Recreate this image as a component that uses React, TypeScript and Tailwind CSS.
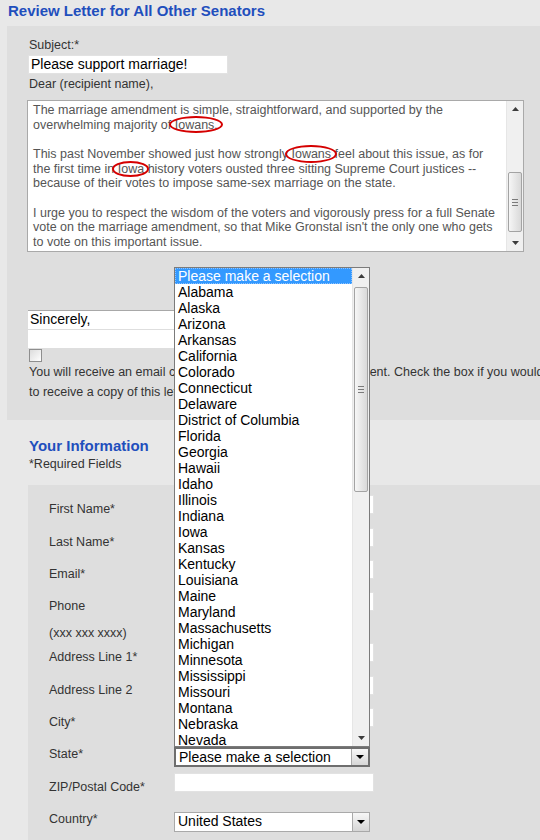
import React from 'react'

const STATES = [
  'Alabama', 'Alaska', 'Arizona', 'Arkansas', 'California', 'Colorado', 'Connecticut', 'Delaware',
  'District of Columbia', 'Florida', 'Georgia', 'Hawaii', 'Idaho', 'Illinois', 'Indiana', 'Iowa',
  'Kansas', 'Kentucky', 'Louisiana', 'Maine', 'Maryland', 'Massachusetts', 'Michigan', 'Minnesota',
  'Mississippi', 'Missouri', 'Montana', 'Nebraska', 'Nevada',
]

const Arrow: React.FC<{ up?: boolean }> = ({ up }) => (
  <svg width="7" height="4" viewBox="0 0 7 4" aria-hidden="true">
    <path d={up ? 'M3.5 0 L7 4 L0 4 Z' : 'M0 0 L7 0 L3.5 4 Z'} fill="#3c3c3c" />
  </svg>
)

// old windows style scrollbar: arrow, thumb with grip, arrow
const Scrollbar: React.FC<{ thumbClass: string }> = ({ thumbClass }) => (
  <div className="flex flex-col w-[17px] h-full bg-[#f0f0f0] border-l border-[#e6e6e6] shrink-0">
    <div className="h-[16px] flex items-center justify-center">
      <Arrow up />
    </div>
    <div className={`mx-[1px] rounded-[2px] border border-[#a3a3a3] bg-gradient-to-r from-[#f6f6f6] to-[#d9d9d9] flex flex-col items-center justify-center gap-[2px] ${thumbClass}`}>
      <div className="w-[6px] h-px bg-[#7a7a7a]" />
      <div className="w-[6px] h-px bg-[#7a7a7a]" />
      <div className="w-[6px] h-px bg-[#7a7a7a]" />
    </div>
    <div className="flex-1" />
    <div className="h-[16px] flex items-center justify-center">
      <Arrow />
    </div>
  </div>
)

const Circled: React.FC<{ children: React.ReactNode; ring: string }> = ({ children, ring }) => (
  <span className="relative">
    {children}
    <span className={`absolute border-2 border-[#d50000] rounded-[50%] ${ring}`} />
  </span>
)

const TextBox: React.FC<{ className?: string; children?: React.ReactNode }> = ({ className = '', children }) => (
  <div className={`w-[200px] h-[19px] bg-white border border-[#e2e2e2] text-[14px] leading-[17px] text-black px-[2px] ${className}`}>
    {children}
  </div>
)

const SelectBox: React.FC<{ value: string; focused?: boolean }> = ({ value, focused }) => (
  <div
    className={`w-[196px] h-[20px] bg-white flex items-stretch ${
      focused ? 'border-2 border-[#6e6e6e]' : 'border border-[#a9a9a9]'
    }`}
  >
    <div className="flex-1 text-[14px] leading-[17px] text-black pl-[3px] whitespace-nowrap overflow-hidden">{value}</div>
    <div className="w-[17px] border-l border-[#a9a9a9] bg-gradient-to-b from-[#f7f7f7] to-[#d6d6d6] flex items-center justify-center">
      <svg width="8" height="4" viewBox="0 0 8 4" aria-hidden="true">
        <path d="M0 0 L8 0 L4 4 Z" fill="#000" />
      </svg>
    </div>
  </div>
)

const Row: React.FC<{ label: string; h: string; labelTop: string; hint?: string; children: React.ReactNode }> = ({
  label,
  h,
  labelTop,
  hint,
  children,
}) => (
  <div className={`flex items-start ${h}`}>
    <div className={`w-[125px] leading-[14px] whitespace-nowrap ${labelTop}`}>
      <div>{label}</div>
      {hint && <div className="mt-[13px]">{hint}</div>}
    </div>
    {children}
  </div>
)

export default function App() {
  return (
    <div className="relative w-[540px] h-[840px] overflow-hidden bg-[#e8e8e8] font-['Liberation_Sans',Arial,sans-serif] text-[12.5px] text-[#333]">
      {/* Letter header */}
      <div className="h-[26px] pl-[8px] pt-[3px] text-[15px] leading-[16px] font-bold text-[#1f4fbd] whitespace-nowrap">
        Review Letter for All Other Senators
      </div>

      {/* Letter panel */}
      <div className="ml-[7px] h-[394px] bg-[#dedede] pt-[12px] pl-[21px]">
        <div className="leading-[14px] pl-px">Subject:*</div>
        <TextBox className="mt-[3px]">Please support marriage!</TextBox>
        <div className="mt-[3px] leading-[14px] pl-px">Dear (recipient name),</div>

        <div className="mt-[9px] -ml-px w-[497px] h-[152px] border border-[#a9a9a9] bg-white flex">
          <div className="flex-1 pl-[5px] pt-[2px] text-[#555] leading-[14.67px] whitespace-nowrap overflow-hidden">
            <div>The marriage amendment is simple, straightforward, and supported by the</div>
            <div>
              overwhelming majority of{' '}
              <Circled ring="-left-[6px] -right-[5px] -top-[2px] -bottom-[1px]">Iowans.</Circled>
            </div>
            <div>&nbsp;</div>
            <div>
              This past November showed just how strongly{' '}
              <Circled ring="-left-[6px] -right-[6px] -top-[2px] -bottom-[2px]">Iowans</Circled> feel about this issue, as for
            </div>
            <div>
              the first time in <Circled ring="-left-[6px] -right-[5px] -top-[1px] -bottom-[1px]">Iowa</Circled> history voters
              ousted three sitting Supreme Court justices --
            </div>
            <div>because of their votes to impose same-sex marriage on the state.</div>
            <div>&nbsp;</div>
            <div>I urge you to respect the wisdom of the voters and vigorously press for a full Senate</div>
            <div>vote on the marriage amendment, so that Mike Gronstal isn't the only one who gets</div>
            <div>to vote on this important issue.</div>
          </div>
          <Scrollbar thumbClass="mt-[55px] h-[60px]" />
        </div>

        <div className="mt-[58px] w-[200px] h-[19px] bg-white border-t border-[#a8a8a8] text-[14px] leading-[17px] text-black px-[2px]">
          Sincerely,
        </div>
        <div className="mt-px w-[200px] h-[18px] bg-white" />
        <div className="mt-px ml-px w-[13px] h-[13px] border border-[#8e8e8e] bg-gradient-to-br from-[#dcdcdc] to-white" />
        <div className="leading-[20px] whitespace-nowrap pl-px">
          <div>You will receive an email confirmation after your message is sent. Check the box if you would like</div>
          <div>to receive a copy of this letter.</div>
        </div>
      </div>

      {/* Your information */}
      <div className="h-[65px] pl-[29px] pt-[18px]">
        <div className="text-[15px] leading-[16px] font-bold text-[#1f4fbd]">Your Information</div>
        <div className="mt-[3px] leading-[14px]">*Required Fields</div>
      </div>

      <div className="ml-[28px] h-[400px] bg-[#dedede] pt-[10px] pl-[21px]">
        <Row label="First Name*" h="h-[33px]" labelTop="mt-[7px]">
          <TextBox />
        </Row>
        <Row label="Last Name*" h="h-[32px]" labelTop="mt-[7px]">
          <TextBox />
        </Row>
        <Row label="Email*" h="h-[32px]" labelTop="mt-[7px]">
          <TextBox />
        </Row>
        <Row label="Phone" hint="(xxx xxx xxxx)" h="h-[51px]" labelTop="mt-[7px]">
          <TextBox />
        </Row>
        <Row label="Address Line 1*" h="h-[33px]" labelTop="mt-[7px]">
          <TextBox />
        </Row>
        <Row label="Address Line 2" h="h-[32px]" labelTop="mt-[7px]">
          <TextBox />
        </Row>
        <Row label="City*" h="h-[39px]" labelTop="mt-[7px]">
          <TextBox />
        </Row>
        <Row label="State*" h="h-[26px]" labelTop="mt-0">
          <SelectBox value="Please make a selection" focused />
        </Row>
        <Row label="ZIP/Postal Code*" h="h-[39px]" labelTop="mt-[7px]">
          <TextBox />
        </Row>
        <Row label="Country*" h="h-[26px]" labelTop="mt-0">
          <SelectBox value="United States" />
        </Row>
      </div>

      {/* Open state dropdown list */}
      <div className="absolute left-[174px] top-[267px] w-[196px] h-[480px] border border-[#7b7b7b] bg-white flex overflow-hidden">
        <div className="flex-1 text-[14px] leading-[16px] text-black whitespace-nowrap overflow-hidden">
          <div className="bg-[#3399ff] text-white pl-[3px] outline-1 outline-dotted outline-[#8fc3ff] -outline-offset-1">
            Please make a selection
          </div>
          {STATES.map(s => (
            <div key={s} className="pl-[3px]">
              {s}
            </div>
          ))}
        </div>
        <Scrollbar thumbClass="mt-[3px] h-[205px]" />
      </div>
    </div>
  )
}
